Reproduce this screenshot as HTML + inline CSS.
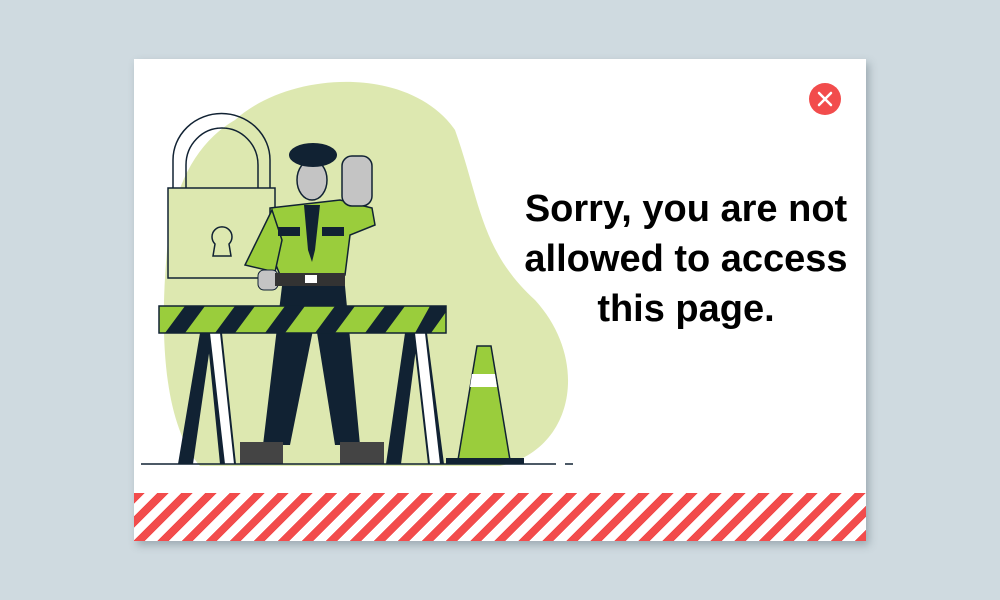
<!DOCTYPE html>
<html><head><meta charset="utf-8"><style>
html,body{margin:0;padding:0;width:1000px;height:600px;background:#cfdae0;overflow:hidden}
.card{position:absolute;left:134px;top:59px;width:732px;height:482px;background:#fff;box-shadow:3px 4px 8px rgba(60,80,90,.35);overflow:hidden}
.stripes{position:absolute;left:0;bottom:0;width:732px;height:48px;background:repeating-linear-gradient(-45deg,#f24c4c 0 8px,#fff 8px 17px)}
.close{position:absolute;left:675px;top:24px;width:32px;height:32px;border-radius:50%;background:#f24c4c}
.txt{position:absolute;left:357px;top:125px;width:390px;text-align:center;font:bold 38px/50px "Liberation Sans",sans-serif;color:#000}
</style></head><body>
<div class="card">
<svg width="732" height="482" style="position:absolute;left:0;top:0" viewBox="134 59 732 482">
<path d="M235 120 C290 70 410 65 455 130 C480 200 480 250 535 300 C590 360 575 450 500 466 L200 466 C160 420 160 320 168 240 C175 180 200 140 235 120Z" fill="#dde8b0"/>
<path d="M173 190 V160 A48 46 0 0 1 270 160 V190 M186 190 V165 A36 37 0 0 1 258 165 V190" fill="none" stroke="#123" stroke-width="1.5"/>
<rect x="168" y="188" width="107" height="90" fill="#dde8b0" stroke="#123" stroke-width="1.5"/>
<path d="M215 244 A10 10 0 1 1 229 244 L231 256 H213Z" fill="#dde8b0" stroke="#123" stroke-width="1.5"/>
<path d="M270 208 L340 200 L372 208 L375 225 L350 235 L345 275 L280 275 L270 250 Z" fill="#9acd3c" stroke="#123" stroke-width="1.5"/>
<path d="M272 210 L245 265 L275 272 L282 240 Z" fill="#9acd3c" stroke="#123" stroke-width="1.5"/>
<rect x="342" y="156" width="30" height="50" rx="10" fill="#c4c4c4" stroke="#123" stroke-width="1.5"/>
<ellipse cx="312" cy="180" rx="15" ry="20" fill="#c4c4c4" stroke="#123" stroke-width="1.5"/>
<ellipse cx="313" cy="155" rx="24" ry="12" fill="#123"/>
<path d="M304 205 H320 L315 250 L312 262 L308 250Z" fill="#123"/>
<rect x="278" y="227" width="22" height="9" fill="#123"/><rect x="322" y="227" width="22" height="9" fill="#123"/>
<rect x="258" y="270" width="20" height="20" rx="6" fill="#c4c4c4" stroke="#123"/>
<rect x="275" y="273" width="70" height="13" fill="#333"/><rect x="305" y="275" width="12" height="8" fill="#fff"/>
<path d="M282 286 H345 L360 445 H335 L315 320 L290 445 H263 Z" fill="#123"/>
<rect x="240" y="442" width="43" height="22" fill="#444"/><rect x="340" y="442" width="44" height="22" fill="#444"/>
<path d="M200 333 L178 464 H193 L212 333Z M207 333 L220 464 H236 L222 333Z M405 333 L386 464 H401 L418 333Z M413 333 L428 464 H444 L427 333Z" fill="#123"/>
<path d="M210 333 L225 464 H234 L220 333Z M415 333 L430 464 H440 L425 333Z" fill="#fff"/>
<rect x="159" y="306" width="287" height="27" fill="#9acd3c" stroke="#123" stroke-width="1.5"/>
<path d="M185 306 H205 L185 333 H165Z M235 306 H255 L235 333 H215Z M285 306 H305 L285 333 H265Z M335 306 H355 L335 333 H315Z M385 306 H405 L385 333 H365Z M430 306 H446 V312 L431 333 H415Z" fill="#123"/>
<path d="M477 346 H491 L510 460 H458Z" fill="#9acd3c" stroke="#123" stroke-width="1.5"/>
<path d="M472 374 H495 L497 387 H470Z" fill="#fff"/>
<rect x="446" y="458" width="78" height="6" fill="#123"/>
<path d="M141 464 H556 M565 464 H573" stroke="#123" stroke-width="1.5"/>
</svg>
<div class="close"><svg width="32" height="32"><path d="M10 10 L22 22 M22 10 L10 22" stroke="#fff" stroke-width="2.5" stroke-linecap="round"/></svg></div>
<div class="txt">Sorry, you are not allowed to access this page.</div>
<div class="stripes"></div>
</div>
</body></html>
